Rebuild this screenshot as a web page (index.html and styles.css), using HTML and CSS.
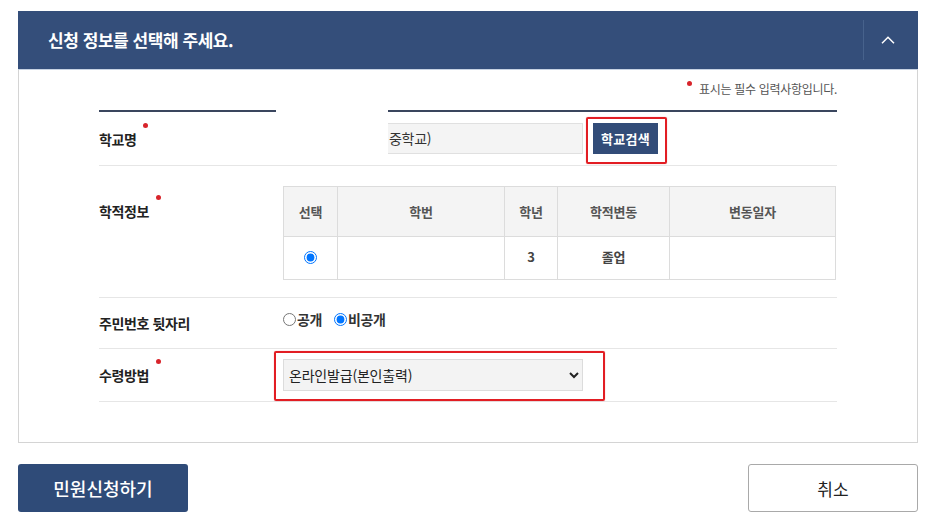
FILE: index.html
```html
<!DOCTYPE html>
<html lang="ko">
<head>
<meta charset="utf-8">
<title>신청 정보</title>
<link rel="stylesheet" href="styles.css">
</head>
<body>
<div class="page">
  <section class="panel">
    <div class="panel-head">
      <h2 class="panel-title">신청 정보를 선택해 주세요.</h2>
      <div class="panel-toggle">
        <svg width="14" height="8" viewBox="0 0 14 8"><path d="M1 7.2 L7 1.2 L13 7.2" fill="none" stroke="#ffffff" stroke-width="1.5"/></svg>
      </div>
    </div>
    <div class="panel-body">
      <p class="req-note"><span class="note-dot"></span>표시는 필수 입력사항입니다.</p>
      <div class="form">
        <div class="row row-school">
          <div class="label"><span>학교명</span><span class="dot"></span></div>
          <div class="field field-school">
            <div class="text-input"><span class="input-value">중학교)</span></div>
            <button class="btn-search" type="button">학교검색</button>
          </div>
        </div>
        <div class="row row-record">
          <div class="label label-top"><span>학적정보</span><span class="dot"></span></div>
          <div class="field">
            <table class="record-table">
              <colgroup>
                <col class="c1"><col class="c2"><col class="c3"><col class="c4"><col class="c5">
              </colgroup>
              <thead>
                <tr><th>선택</th><th>학번</th><th>학년</th><th>학적변동</th><th>변동일자</th></tr>
              </thead>
              <tbody>
                <tr><td><input type="radio" name="rec" checked class="radio"></td><td></td><td>3</td><td>졸업</td><td></td></tr>
              </tbody>
            </table>
          </div>
        </div>
        <div class="row row-id">
          <div class="label"><span>주민번호 뒷자리</span></div>
          <div class="field field-radios">
            <label class="opt"><input type="radio" name="pub" class="radio">공개</label>
            <label class="opt"><input type="radio" name="pub" class="radio" checked>비공개</label>
          </div>
        </div>
        <div class="row row-receive">
          <div class="label"><span>수령방법</span><span class="dot"></span></div>
          <div class="field">
            <select class="select">
              <option>온라인발급(본인출력)</option>
            </select>
          </div>
        </div>
      </div>
      <div class="mask"></div>
      <div class="mark mark-search"></div>
      <div class="mark mark-select"></div>
    </div>
  </section>
  <div class="actions">
    <button class="btn btn-primary" type="button">민원신청하기</button>
    <button class="btn btn-cancel" type="button">취소</button>
  </div>
</div>
</body>
</html>
```

FILE: styles.css
```css
* { box-sizing: border-box; }
html, body { margin: 0; padding: 0; background: #ffffff; }
body {
  font-family: "Noto Sans CJK KR", "Noto Sans", sans-serif;
  color: #222;
}
.page {
  width: 900px;
  margin: 11px 0 0 18px;
}
.panel-head {
  display: flex;
  align-items: center;
  height: 59px;
  background: #344e7a;
  border-bottom: 1px solid #c7d2e2;
}
.panel-title {
  flex: 1;
  margin: 0;
  padding-left: 30px;
  font-size: 17px;
  font-weight: 700;
  letter-spacing: -0.45px;
  line-height: 24px;
  color: #ffffff;
}
.panel-toggle {
  width: 55px;
  height: 40px;
  border-left: 1px solid #47628c;
  display: flex;
  align-items: center;
  justify-content: center;
  padding-right: 6px;
}
.panel-body {
  position: relative;
  border: 1px solid #d4d4d4;
  border-top: none;
  padding: 10px 80px 40px 80px;
}
.req-note {
  margin: 0;
  display: flex;
  justify-content: flex-end;
  align-items: flex-start;
  font-size: 12px;
  line-height: 18px;
  letter-spacing: -0.3px;
  color: #555;
}
.note-dot {
  width: 5px;
  height: 5px;
  border-radius: 50%;
  background: #d8242b;
  margin: 1px 7px 0 0;
}
.form {
  margin-top: 12px;
  border-top: 2px solid #3a465e;
}
.row {
  display: flex;
  align-items: center;
  border-bottom: 1px solid #e6e6e6;
}
.label {
  width: 184px;
  flex: none;
  display: flex;
  align-items: flex-start;
  font-size: 14px;
  font-weight: 700;
  line-height: 20px;
  letter-spacing: -0.4px;
  color: #222;
}
.dot {
  width: 5px;
  height: 5px;
  border-radius: 50%;
  background: #d8242b;
  margin: -6px 0 0 7px;
}
.field { flex: 1; }

.row-school { padding: 11px 0; }
.field-school { display: flex; align-items: center; gap: 10px; }
.text-input {
  width: 300px;
  height: 31px;
  background: #f4f4f4;
  border: 1px solid #e0e0e0;
  padding-left: 105px;
  font-size: 14px;
  line-height: 29px;
  color: #333;
  letter-spacing: -0.3px;
}
.btn-search {
  width: 65px;
  height: 31px;
  border: none;
  background: #324c78;
  color: #fff;
  font-family: inherit;
  font-size: 13px;
  font-weight: 700;
  letter-spacing: 0.3px;
  padding: 0;
}

.row-record { align-items: flex-start; padding: 20px 0 17px; }
.label-top { padding-top: 15px; }
.record-table {
  width: 552px;
  table-layout: fixed;
  border-collapse: collapse;
  font-size: 13px;
  font-weight: 700;
  letter-spacing: -0.2px;
}
.record-table .c1 { width: 54px; }
.record-table .c2 { width: 167px; }
.record-table .c3 { width: 53px; }
.record-table .c4 { width: 112px; }
.record-table .c5 { width: 166px; }
.record-table th, .record-table td {
  border: 1px solid #dcdcdc;
  text-align: center;
  padding: 0;
}
.record-table th {
  height: 50px;
  background: #f4f4f4;
  color: #555;
  font-weight: 700;
}
.record-table td {
  height: 43px;
  padding-bottom: 3px;
  color: #444;
}
.radio {
  width: 13px;
  height: 13px;
  margin: 0;
  vertical-align: middle;
}
.record-table .radio { margin-top: -1px; }

.row-id { height: 51px; }
.field-radios {
  display: flex;
  align-items: center;
  gap: 12px;
  margin-bottom: 8px;
  font-size: 14px;
  font-weight: 700;
  line-height: 20px;
  letter-spacing: -0.4px;
  color: #333;
}
.opt { display: flex; align-items: center; gap: 1px; }

.row-receive { padding: 10px 0 10px; }
.select {
  width: 300px;
  height: 32px;
  background: #f3f3f3;
  border: 1px solid #dcdcdc;
  border-radius: 0;
  font-family: inherit;
  font-size: 14px;
  color: #222;
  padding-left: 1px;
  letter-spacing: -0.2px;
}

.mask {
  position: absolute;
  left: 257px;
  top: 34px;
  width: 112px;
  height: 56px;
  background: #ffffff;
}
.mark {
  position: absolute;
  border: 2px solid #e21d23;
  border-radius: 2px;
  box-shadow: 0 0 1px rgba(226, 29, 35, 0.6);
}
.mark-search { left: 567px; top: 47px; width: 81px; height: 47px; }
.mark-select { left: 255px; top: 281px; width: 331px; height: 50px; }

.actions {
  display: flex;
  justify-content: space-between;
  margin-top: 21px;
}
.btn {
  width: 170px;
  height: 48px;
  border-radius: 3px;
  font-family: inherit;
  padding: 0;
}
.btn-primary {
  background: #2f4b78;
  border: none;
  color: #fff;
  font-size: 18px;
  font-weight: 500;
  letter-spacing: 0;
}
.btn-cancel {
  background: #fff;
  border: 1px solid #a9a9a9;
  color: #222;
  font-size: 17px;
  font-weight: 400;
  letter-spacing: 0;
}
```
